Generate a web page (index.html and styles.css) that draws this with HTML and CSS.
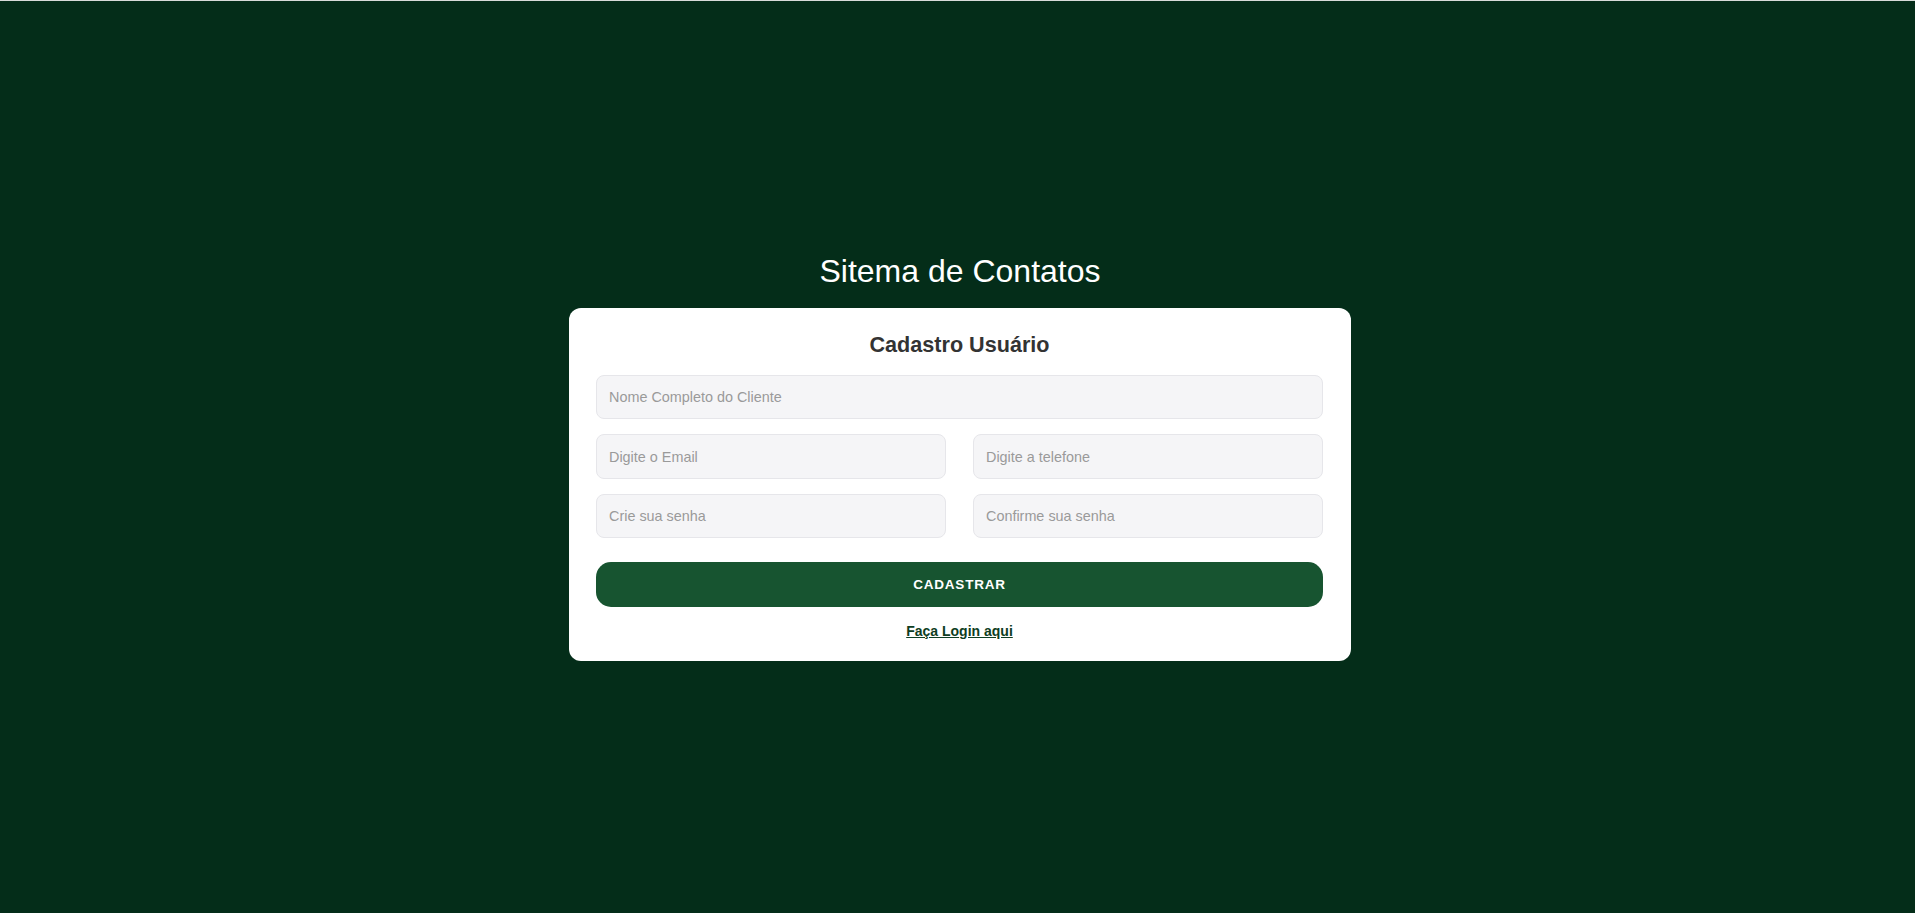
FILE: index.html
```html
<!DOCTYPE html>
<html lang="pt-BR">
<head>
<meta charset="utf-8">
<title>Sitema de Contatos</title>
<link rel="stylesheet" href="styles.css">
</head>
<body>
<main class="page">
  <h1 class="page-title">Sitema de Contatos</h1>
  <form class="card">
    <h2 class="card-title">Cadastro Usuário</h2>
    <div class="fields">
      <input class="field field-full" type="text" placeholder="Nome Completo do Cliente">
      <input class="field" type="email" placeholder="Digite o Email">
      <input class="field" type="tel" placeholder="Digite a telefone">
      <input class="field" type="password" placeholder="Crie sua senha">
      <input class="field" type="password" placeholder="Confirme sua senha">
    </div>
    <button class="submit" type="button">CADASTRAR</button>
    <a class="login-link" href="#">Faça Login aqui</a>
  </form>
</main>
</body>
</html>
```

FILE: styles.css
```css
* {
  box-sizing: border-box;
}

html, body {
  margin: 0;
  padding: 0;
}

body {
  background: #042d19;
  font-family: "Liberation Sans", Arial, sans-serif;
  border-top: 1px solid #d9dcda;
}

.page {
  min-height: 912px;
  padding-left: 5px;
  display: flex;
  flex-direction: column;
  align-items: center;
  justify-content: center;
  gap: 18px;
}

.page-title {
  margin: 0;
  color: #ffffff;
  font-size: 32px;
  font-weight: 400;
  line-height: normal;
}

.card {
  width: 782px;
  background: #ffffff;
  border-radius: 12px;
  padding: 24px 28px 22px 27px;
  display: flex;
  flex-direction: column;
  align-items: center;
}

.card-title {
  margin: 0 0 17px;
  color: #333333;
  font-size: 21.6px;
  font-weight: 700;
  line-height: normal;
}

.fields {
  width: 100%;
  display: grid;
  grid-template-columns: 1fr 1fr;
  column-gap: 27px;
  row-gap: 15px;
}

.field {
  height: 44.5px;
  width: 100%;
  border: 1px solid #e6e6ea;
  border-radius: 8px;
  background: #f5f5f7;
  padding: 0 12px;
  font-family: "Liberation Sans", Arial, sans-serif;
  font-size: 14.4px;
  color: #333333;
  outline: none;
}

.field::placeholder {
  color: #9a9a9a;
}

.field-full {
  grid-column: 1 / -1;
}

.submit {
  margin-top: 24px;
  width: 100%;
  height: 44.7px;
  border: none;
  border-radius: 15px;
  background: #175430;
  color: #ffffff;
  font-family: "Liberation Sans", Arial, sans-serif;
  font-size: 13.5px;
  font-weight: 700;
  letter-spacing: 0.8px;
  cursor: pointer;
}

.login-link {
  margin-top: 16px;
  color: #0e3d22;
  font-size: 14px;
  font-weight: 700;
  text-decoration: underline;
  line-height: normal;
}
```
